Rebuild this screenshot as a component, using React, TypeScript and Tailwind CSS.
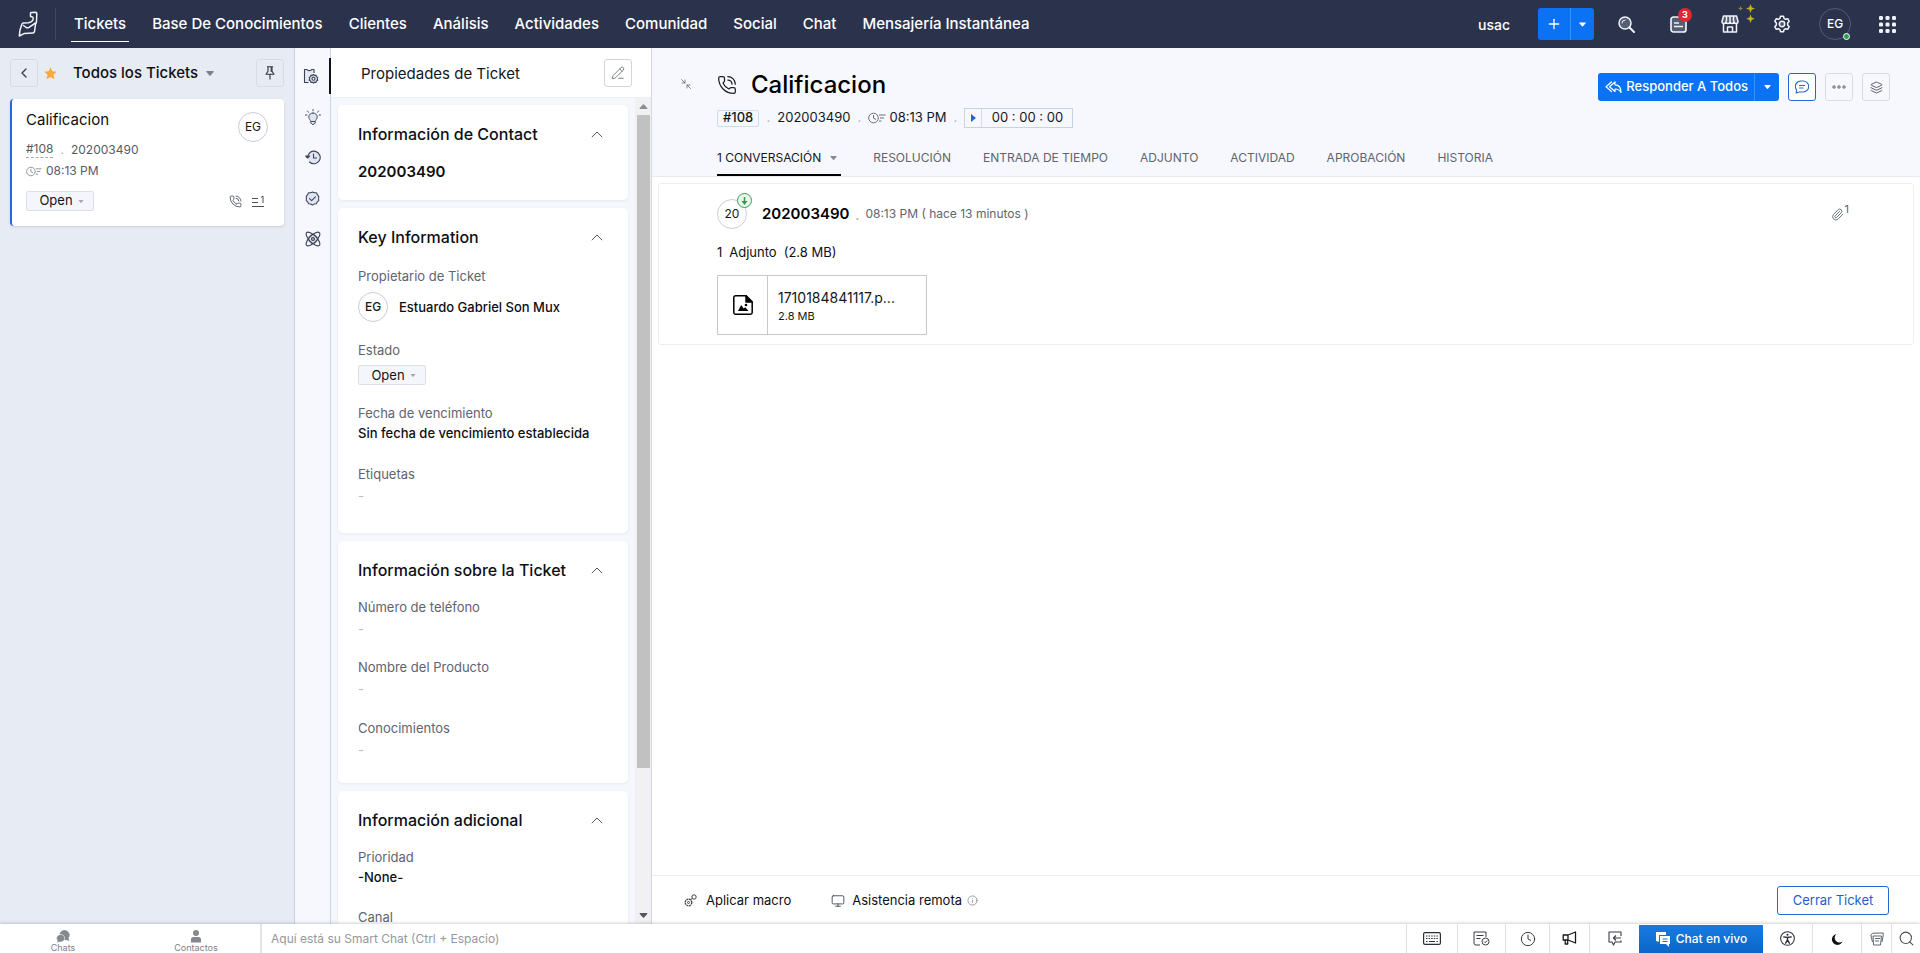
import React from 'react';
import {
  ChevronLeft, PhoneCall, Layers, Search, Plus,
  Paperclip, Monitor, Info, Clock, Minimize2, PencilLine,
} from 'lucide-react';

const navItems = ['Tickets', 'Base De Conocimientos', 'Clientes', 'Análisis', 'Actividades', 'Comunidad', 'Social', 'Chat', 'Mensajería Instantánea'];
const tabs = ['RESOLUCIÓN', 'ENTRADA DE TIEMPO', 'ADJUNTO', 'ACTIVIDAD', 'APROBACIÓN', 'HISTORIA'];

function Caret({ className }: { className: string }) {
  return (
    <svg viewBox="0 0 10 6" className={className} fill="currentColor" aria-hidden="true">
      <path d="M1 0h8c.7 0 1 .7.5 1.200L5.700 5.500a1 1 0 0 1-1.400 0L.5 1.200C0 .7.300 0 1 0z" />
    </svg>
  );
}

function Logo() {
  return (
    <svg width="22" height="30" viewBox="0 0 22 30" fill="none" stroke="#f1f3f8" strokeWidth="1.500" strokeLinejoin="round" strokeLinecap="round" aria-hidden="true">
      <path d="M13.500 4.200 Q13.500 3.700 14 3.600 L18.500 3.200 Q19.800 3.200 19.800 4.500 L19.500 12.500 Q19.300 14 18.500 15.500 L17.500 22.500 Q17.200 24 15.800 24.100 L7 24.600 L2.300 27 L3 21 L4.800 15.500 Q5.200 14.200 6.500 14.100 L11.500 13.700 Q16 12.800 16.200 9.500 Q16.200 7.800 15 7.700 L14 7.700 Q13.500 7.600 13.500 7.200 Z" />
      <path d="M6.500 16.500 L9.200 18.500 Q10.500 19.200 12 18.300 L18.500 14" />
    </svg>
  );
}

function ClockList({ className }: { className: string }) {
  return (
    <svg viewBox="0 0 18 12" className={className} fill="none" stroke="currentColor" strokeWidth="1" aria-hidden="true">
      <circle cx="5.500" cy="6" r="4.800" />
      <path d="M5.500 3v3.200l2.500 1.300M11 3h6.500M12 6h4M11 9h2.500" />
    </svg>
  );
}

function Gear({ className }: { className: string }) {
  return (
    <svg viewBox="0 0 20 20" className={className} fill="none" stroke="currentColor" strokeWidth="1.700" strokeLinejoin="round" aria-hidden="true">
      <path d="M8.300 1.500h3.400l.6 2.300 1.700 1 2.300-.7L18 7l-1.700 1.900v2.200L18 13l-1.700 2.900-2.300-.7-1.700 1-.6 2.300H8.300l-.6-2.300-1.700-1-2.300.7L2 13l1.700-1.900V8.900L2 7l1.700-2.900 2.300.7 1.700-1z" />
      <circle cx="10" cy="10" r="3" fill="#565e75" />
    </svg>
  );
}

function TicketGear() {
  return (
    <svg width="16" height="16" viewBox="0 0 16 16" fill="none" stroke="#3b4256" strokeWidth="1.100" strokeLinejoin="round" aria-hidden="true">
      <path d="M5.500 14.500H1.500V1.500h2.500c0 1.500 4.500 1.500 4.500 0h2.500V5" fill="#e4e8f3" />
      <path d="M10.500 6.500l1 .9 1.500-.2.500 1.400 1.300.8-.5 1.400.5 1.400-1.300.8-.5 1.400-1.500-.2-1 .8-1-.8-1.500.2-.5-1.400-1.300-.8.500-1.400-.5-1.400 1.300-.8.500-1.400 1.500.2z" fill="#d5d9e6" />
      <circle cx="10.500" cy="10.800" r="1.500" fill="#fff" />
    </svg>
  );
}

function HistoryClock() {
  return (
    <svg width="16" height="15" viewBox="0 0 16 15" fill="#e0e5f2" stroke="#3b4256" strokeWidth="1.100" strokeLinecap="round" strokeLinejoin="round" aria-hidden="true">
      <path d="M2.600 7.500A6.300 6.300 0 1 1 4.500 12" />
      <path d="M.7 6l1.900 2L4.500 6zM8.500 4v4h3" fill="none" />
    </svg>
  );
}

function SealCheck() {
  return (
    <svg width="15" height="15" viewBox="0 0 16 16" fill="#e0e5f2" stroke="#3b4256" strokeWidth="1.100" strokeLinejoin="round" strokeLinecap="round" aria-hidden="true">
      <path d="M8 1l2 .8 2.200.1 1 2L14.700 6l-.2 2.200.2 2-1.700 1.500-1 1.900-2.100.2L8 15l-2-1.200-2.100-.2-1-1.900-1.600-1.500L1.500 8l-.2-2 1.500-2.100 1-2L6 1.800z" />
      <path d="M4.800 8.200l2.300 2.100 4-4.100" fill="none" />
    </svg>
  );
}

function AtomIcon() {
  return (
    <svg width="16" height="16" viewBox="0 0 16 16" fill="none" stroke="#3b4256" strokeWidth="1.100" aria-hidden="true">
      <circle cx="8" cy="8" r="4.500" fill="#dfe4f1" strokeWidth=".7" />
      <ellipse cx="8" cy="8" rx="9" ry="3.600" transform="rotate(45 8 8)" />
      <ellipse cx="8" cy="8" rx="9" ry="3.600" transform="rotate(-45 8 8)" />
      <circle cx="8" cy="8" r="1.500" fill="#aeb5c8" />
    </svg>
  );
}

function ReplyAllIcon() {
  return (
    <svg width="17" height="13" viewBox="0 0 17 13" fill="none" stroke="currentColor" strokeWidth="1.200" strokeLinejoin="round" strokeLinecap="round" aria-hidden="true">
      <path d="M6.500 1L1 5.700l5.500 4.800" />
      <path d="M10 1v2.800c3.500 0 6 2.500 6 7.700-1.300-2.500-3-3.500-6-3.500v2.500L4.500 5.700z" />
    </svg>
  );
}

function PinIcon() {
  return (
    <svg width="10" height="14" viewBox="0 0 10 14" fill="none" stroke="#2e3440" strokeWidth="1.100" strokeLinejoin="round" aria-hidden="true">
      <path d="M2 .8h6M3 .8v4.400L1 8.300h8L7 5.200V.8M5 8.300v5.200" />
      <path d="M6.200 1v5" />
    </svg>
  );
}

function Avatar({ text }: { text: string }) {
  return (
    <span className="flex size-[30px] shrink-0 items-center justify-center rounded-full border border-[#c9ccd8] bg-white text-[12px] text-[#15171c]">{text}</span>
  );
}

function StatusButton() {
  return (
    <button className="flex h-5 w-[68px] items-center justify-center gap-[5px] rounded-[2px] border border-[#dcdfea] bg-[#f5f6fb] pl-[3px] text-[13px] text-[#111318]">
      Open
      <Caret className="h-[3px] w-[6px] text-[#a3a8b3]" />
    </button>
  );
}

function TicketList() {
  return (
    <aside className="flex w-[295px] shrink-0 flex-col border-r border-[#c9d2e4] bg-[#e7ebf4] px-[10px] pt-[10px]">
      <div className="flex h-[30px] items-center">
        <button aria-label="Volver" className="flex size-[28px] items-center justify-center rounded-[3px] border border-[#d6dbe7]">
          <ChevronLeft className="size-4 text-[#3a4050]" />
        </button>
        <svg viewBox="0 0 14 14" className="ml-[6px] size-[13px]" fill="#f9a93a" aria-hidden="true">
          <path d="M7 .3l2 4.400 4.700.5-3.500 3.200 1 4.800L7 10.800l-4.200 2.400 1-4.800L.3 5.200 5 4.700z" />
        </svg>
        <h2 className="ml-[16px] whitespace-nowrap text-[15px] font-medium text-[#0d0f14]">Todos los Tickets</h2>
        <Caret className="ml-2 h-[5px] w-[8px] text-[#7a808e]" />
        <button aria-label="Fijar" className="ml-auto flex size-[28px] items-center justify-center rounded-[3px] border border-[#d6dbe7]">
          <PinIcon />
        </button>
      </div>
      <article className="mt-[11px] flex h-[127px] flex-col rounded-[4px] border-l-2 border-[#2c66dd] bg-white pl-[14px] pr-4 shadow-sm">
        <div className="flex justify-between pt-[13px]">
          <div className="flex flex-col">
            <h3 className="text-[15px] leading-4 text-[#0d0f14]">Calificacion</h3>
            <div className="mt-[13px] flex items-center text-[12px] leading-4 text-[#565b66]">
              <a href="#108" className="border-b border-dashed border-[#a5a9b4]">#108</a>
              <span className="mx-[7px] text-[#a5a9b4]">.</span>
              <span>202003490</span>
            </div>
            <div className="mt-[5px] flex items-center gap-1 text-[12px] leading-4 text-[#565b66]">
              <ClockList className="h-[11px] w-[16px] text-[#858a96]" />
              08:13 PM
            </div>
          </div>
          <Avatar text="EG" />
        </div>
        <div className="mt-3 flex items-center">
          <StatusButton />
          <PhoneCall className="ml-auto size-[13px] stroke-[1.500] text-[#3c4250]" />
          <svg viewBox="0 0 14 12" className="ml-[9px] mr-[3px] h-3 w-[14px] text-[#4a4f5c]" fill="none" stroke="currentColor" aria-hidden="true">
            <path d="M1 3.500h6M1 7.500h6M1 11.500h12M10 2.500l2-1.500v7" />
          </svg>
        </div>
      </article>
    </aside>
  );
}

function Rail() {
  return (
    <nav aria-label="Paneles" className="flex w-9 shrink-0 flex-col items-center border-r border-[#cdd5e6] bg-[#f6f8fd] pt-[10px] text-[#3b4256]">
      <button aria-label="Propiedades" className="flex h-9 w-9 items-center justify-center border-r-2 border-[#10131a] pr-px"><TicketGear /></button>
      <button aria-label="Sugerencias" className="mt-[5px] flex h-9 items-center justify-center">
        <svg width="16" height="16" viewBox="0 0 16 16" fill="none" stroke="#4b5268" strokeLinejoin="round" strokeLinecap="round" aria-hidden="true">
          <path d="M8 4c2.500 0 4.200 1.700 4.200 4 0 2-1.500 2.800-2 4.500v1.500L9 15.300H7L5.800 14v-1.500C5.300 10.800 3.800 10 3.800 8 3.800 5.700 5.500 4 8 4z" fill="#dfe4f1" />
          <path d="M8 .5v1.300M2.500 2l1 1.300M13.500 2l-1 1.300M.5 6h1.500M14 6h1.500M6 12.500h4" />
        </svg>
      </button>
      <button aria-label="Historial" className="mt-[4px] flex h-9 items-center justify-center"><HistoryClock /></button>
      <button aria-label="Aprobaciones" className="mt-[5px] flex h-9 items-center justify-center"><SealCheck /></button>
      <button aria-label="Integraciones" className="mt-[5px] flex h-9 items-center justify-center"><AtomIcon /></button>
    </nav>
  );
}

function Card({ title, children, className }: { title: string; children: React.ReactNode; className: string }) {
  return (
    <section className={`shrink-0 rounded-[5px] bg-white px-5 pt-[19px] shadow-[0_1px_3px_rgba(40,50,90,0.08)] ${className}`}>
      <div className="flex h-5 items-center justify-between pr-[3px]">
        <h3 className="whitespace-nowrap text-[16px] font-medium text-[#0d0f14]">{title}</h3>
        <button aria-label={`Contraer ${title}`}>
          <svg width="12" height="7" viewBox="0 0 12 7" fill="none" stroke="#555a66" className="mr-[2px]" aria-hidden="true"><path d="M.8 6.200L6 1l5.200 5.200" /></svg>
        </button>
      </div>
      {children}
    </section>
  );
}

function Field({ label, children, className = '' }: { label: string; children?: React.ReactNode; className?: string }) {
  return (
    <div className={`flex flex-col items-start text-[13px] leading-5 ${className}`}>
      <span className="text-[#60646f]">{label}</span>
      {children}
    </div>
  );
}

const Dash = () => <span className="pt-[2px] text-[#b9bcc5]">-</span>;

function Properties() {
  return (
    <section className="flex w-[321px] shrink-0 flex-col border-r border-[#d3d6df] bg-[#f6f7fc]">
      <header className="flex h-[50px] items-center justify-between border-b border-[#eceef5] bg-white pl-[30px] pr-[19px]">
        <h2 className="pt-[3px] text-[15px] text-[#15171c]">Propiedades de Ticket</h2>
        <button aria-label="Editar" className="flex size-[28px] items-center justify-center rounded-[3px] border border-[#d3d6df] bg-white">
          <PencilLine className="size-[14px] stroke-[1.300] text-[#555a66]" />
        </button>
      </header>
      <div className="flex min-h-0 flex-1">
        <div className="flex min-w-0 flex-1 flex-col gap-2 overflow-hidden py-[7px] pl-[7px] pr-[7px]">
          <Card title="Información de Contact" className="h-[95px]">
            <p className="mt-[18px] text-[15px] font-semibold leading-5 text-[#0d0f14]">202003490</p>
          </Card>
          <Card title="Key Information" className="h-[325px]">
            <Field label="Propietario de Ticket" className="mt-[19px]">
              <span className="mt-[6px] flex items-center gap-[11px] font-medium text-[#0d0f14]"><Avatar text="EG" />Estuardo Gabriel Son Mux</span>
            </Field>
            <Field label="Estado" className="mt-[18px]">
              <span className="mt-[5px]"><StatusButton /></span>
            </Field>
            <Field label="Fecha de vencimiento" className="mt-[18px]">
              <span className="whitespace-nowrap font-medium text-[#0d0f14]">Sin fecha de vencimiento establecida</span>
            </Field>
            <Field label="Etiquetas" className="mt-[21px]"><Dash /></Field>
          </Card>
          <Card title="Información sobre la Ticket" className="h-[242px]">
            <Field label="Número de teléfono" className="mt-[17px]"><Dash /></Field>
            <Field label="Nombre del Producto" className="mt-[18px]"><Dash /></Field>
            <Field label="Conocimientos" className="mt-[19px]"><Dash /></Field>
          </Card>
          <Card title="Información adicional" className="h-[242px]">
            <Field label="Prioridad" className="mt-[17px]"><span className="font-medium text-[#0d0f14]">-None-</span></Field>
            <Field label="Canal" className="mt-[20px]" />
          </Card>
        </div>
        <div className="flex w-4 shrink-0 flex-col items-center bg-[#f1f1f3] text-[#55585f]">
          <Caret className="my-[6px] h-[5px] w-[9px] rotate-180 text-[#8b8e95]" />
          <div className="w-[13px] flex-[653] bg-[#c1c1c1]" />
          <div className="flex-[139]" />
          <Caret className="my-[6px] h-[5px] w-[9px]" />
        </div>
      </div>
    </section>
  );
}

const Dot = () => <span className="w-[18px] text-center text-[#b3b6bf]">.</span>;

function Ticket() {
  return (
    <main className="flex min-w-0 flex-1 flex-col bg-white">
      <header className="flex h-[129px] flex-col border-b border-[#e8eaf1] bg-[#f7f8fd]">
        <div className="flex items-start pr-[30px] pt-[21px]">
          <button aria-label="Contraer" className="ml-[28px] mt-[9px]"><Minimize2 className="size-3 rotate-90 stroke-[1.500] text-[#5a5f6b]" /></button>
          <PhoneCall className="ml-[25px] mt-[6px] size-5 stroke-[1.500] text-[#1b1e26]" />
          <h1 className="ml-[14px] text-[24px] font-medium leading-8 text-black">Calificacion</h1>
          <div className="ml-auto mt-[4px] flex gap-[9px]">
            <div className="flex h-7 overflow-hidden rounded-[3px] bg-[#0a72f3] text-white">
              <button className="flex items-center gap-1 pl-[7px] pr-[6px] text-[13px] font-medium">
                <ReplyAllIcon />
                Responder A Todos
              </button>
              <button aria-label="Más respuestas" className="flex w-[25px] items-center justify-center border-l border-[#3d90f7]"><Caret className="h-[4px] w-[7px]" /></button>
            </div>
            <button aria-label="Comentario" className="flex size-7 items-center justify-center rounded-[3px] border border-[#2468d6] bg-white text-[#2468d6]">
              <svg width="14" height="14" viewBox="0 0 14 14" fill="none" stroke="currentColor" strokeWidth="1.100" strokeLinejoin="round" strokeLinecap="round" aria-hidden="true">
                <path d="M1 13l.7-3A5.500 5.500 0 0 1 6.500 1h1.700a5 5 0 0 1 0 11H4.500z M4.500 5.500h5M4.500 8h3.500" />
              </svg>
            </button>
            <button aria-label="Más" className="flex size-7 items-center justify-center rounded-[3px] border border-[#d8dbe4] text-[#5a5f6b]">
              <svg width="14" height="4" viewBox="0 0 14 4" fill="none" stroke="currentColor" aria-hidden="true"><circle cx="2" cy="2" r="1.200" /><circle cx="7" cy="2" r="1.200" /><circle cx="12" cy="2" r="1.200" /></svg>
            </button>
            <button aria-label="Capas" className="flex size-7 items-center justify-center rounded-[3px] border border-[#d8dbe4] text-[#5a5f6b]">
              <Layers className="size-[13px] stroke-[1.800]" />
            </button>
          </div>
        </div>
        <div className="ml-[65px] mt-[7px] flex h-5 items-center text-[13px] text-[#15171c]">
          <span className="flex h-[17px] items-center rounded-[2px] border border-[#cfdcec] px-[5px] font-medium">#108</span>
          <Dot />
          <span>202003490</span>
          <Dot />
          <ClockList className="mr-[3px] h-3 w-[18px] text-[#6a6f7b]" />
          <span>08:13 PM</span>
          <Dot />
          <span className="flex h-5 items-stretch border border-[#c9d3de]">
            <button aria-label="Iniciar temporizador" className="flex w-[17px] items-center justify-center border-r border-[#d5dce6]">
              <svg width="5" height="8" viewBox="0 0 5 8" fill="#1668dc" aria-hidden="true"><path d="M0 0l5 4-5 4z" /></svg>
            </button>
            <span className="flex w-[90px] items-center justify-center">00 : 00 : 00</span>
          </span>
        </div>
        <nav className="ml-[65px] mt-auto flex h-9 gap-8 text-[12px] text-[#60646f]">
          <button className="flex items-center gap-[9px] border-b-2 border-black pr-1 pt-[2px] text-[#15171c]">
            <span>1 CONVERSACIÓN</span>
            <Caret className="h-[4px] w-[7px] text-[#858a96]" />
          </button>
          {tabs.map((t) => <button key={t}>{t}</button>)}
        </nav>
      </header>
      <div className="min-h-0 flex-1 px-[6px] pt-[6px]">
        <article className="h-[162px] rounded-[3px] border border-[#ecedf3] pl-[58px] pr-[64px] pt-[15px]">
          <div className="flex h-[30px] items-center">
            <div className="relative">
              <Avatar text="20" />
              <span className="absolute -top-[6px] left-5 flex size-[15px] items-center justify-center rounded-full border border-[#35a24e] bg-[#e9f7ec] text-[#2f9a48]">
                <svg width="7" height="8" viewBox="0 0 7 8" fill="currentColor" aria-hidden="true"><path d="M2.800 0h1.400v4H6.500L3.500 8 .5 4h2.300z" /></svg>
              </span>
            </div>
            <span className="ml-[15px] text-[15px] font-semibold text-black">202003490</span>
            <span className="w-4 text-center text-[#b3b6bf]">.</span>
            <span className="text-[12px] text-[#60646f]">08:13 PM ( hace 13 minutos )</span>
            <Paperclip className="ml-auto size-[13px] stroke-[1.700] text-[#60646f]" />
            <sup className="ml-px text-[11px] text-[#60646f]">1</sup>
          </div>
          <p className="mt-[15px] flex gap-[7px] text-[13px] leading-4 text-[#0d0f14]"><span>1</span><span>Adjunto</span><span>(2.8 MB)</span></p>
          <div className="mt-[15px] flex h-[60px] w-[210px] border border-[#c4c8d1]">
            <span className="flex w-[50px] items-center justify-center border-r border-[#c4c8d1]">
              <svg width="20" height="20" viewBox="0 0 20 20" fill="none" stroke="#000" strokeWidth="1.500" strokeLinejoin="round" aria-hidden="true">
                <path d="M13 .8H2.500A1.700 1.700 0 0 0 .8 2.500v15a1.700 1.700 0 0 0 1.700 1.700h15a1.700 1.700 0 0 0 1.700-1.700V7z" />
                <path d="M13 .8V7h6.200z" fill="#000" />
                <path d="M5 16l3.200-6 2.500 3.500 1.500-1.200L15.500 16z" fill="#000" stroke="none" />
                <circle cx="13" cy="10" r="1.300" fill="#000" stroke="none" />
              </svg>
            </span>
            <span className="flex flex-col justify-center pl-[10px] pt-[2px] text-[#15171c]">
              <span className="text-[14px] leading-5">1710184841117.p...</span>
              <span className="text-[11px] leading-4">2.8 MB</span>
            </span>
          </div>
        </article>
      </div>
      <footer className="flex h-[49px] shrink-0 items-center border-t border-[#ebedf2] pl-8 pr-[31px] pt-px text-[13px] text-[#0d0f14]">
        <button className="flex items-center gap-[9px]">
          <svg width="13" height="13" viewBox="0 0 13 13" fill="none" stroke="#3c4250" aria-hidden="true">
            <circle cx="4.500" cy="8.500" r="3.300" strokeWidth="1.300" strokeDasharray="2 .6" /><circle cx="4.500" cy="8.500" r="1" /><circle cx="10" cy="3" r="2.200" /><path d="M6.500 6l2-1.800" />
          </svg>
          Aplicar macro
        </button>
        <button className="ml-[40px] flex items-center">
          <Monitor className="mr-[7px] size-[14px] stroke-[1.500] text-[#3c4250]" />
          Asistencia remota
          <Info className="ml-[5px] size-[11px] stroke-[1.500] text-[#70757f]" />
        </button>
        <button className="ml-auto h-[29px] w-[112px] rounded-[3px] border border-[#2468d6] text-[13px] text-[#1d5fd0]">Cerrar Ticket</button>
      </footer>
    </main>
  );
}

function TopBar() {
  return (
    <header className="flex h-12 shrink-0 items-center bg-[#2b334c] text-white">
      <a href="#inicio" aria-label="Inicio" className="ml-[17px] flex w-[22px]"><Logo /></a>
      <span className="ml-4 h-8 w-px bg-[#3f4762]" />
      <nav className="ml-[15px] flex items-center gap-5 text-[15px] font-medium">
        {navItems.map((n, i) => (
          <a key={n} href="#nav" className={`flex h-9 items-center whitespace-nowrap border-b px-[3px] pt-[2px] ${i === 0 ? 'border-white' : 'border-transparent'}`}>{n}</a>
        ))}
      </nav>
      <div className="ml-auto flex items-center pr-6">
        <span className="text-[14px] font-medium">usac</span>
        <div className="ml-7 flex h-8 overflow-hidden rounded-[3px] bg-[#0a72f3]">
          <button aria-label="Agregar" className="flex w-8 items-center justify-center"><Plus className="size-[16px] stroke-[2]" /></button>
          <button aria-label="Más opciones" className="flex w-6 items-center justify-center border-l border-[#3d90f7]"><Caret className="h-[5px] w-[7px]" /></button>
        </div>
        <button aria-label="Buscar" className="ml-6">
          <svg width="17" height="17" viewBox="0 0 17 17" fill="none" stroke="#f1f3f8" strokeWidth="1.500" strokeLinecap="round" aria-hidden="true">
            <circle cx="7" cy="7" r="6" fill="#565e75" /><path d="M11.500 11.500l4.500 4.500" strokeWidth="2" /><path d="M4 7a3 3 0 0 1 3-3" strokeWidth="1" />
          </svg>
        </button>
        <button aria-label="Novedades" className="relative ml-[35px]">
          <svg width="17" height="17" viewBox="0 0 17 17" fill="#565e75" stroke="#f1f3f8" strokeWidth="1.700" strokeLinejoin="round" aria-hidden="true">
            <path d="M1 3.500A2.500 2.500 0 0 1 3.500 1H11l5 5v7.500a2.500 2.500 0 0 1-2.500 2.500h-10A2.500 2.500 0 0 1 1 13.500z" /><path d="M4 7h5M4 10.500h9" />
          </svg>
          <span className="absolute -top-[8px] left-2 flex size-[14px] items-center justify-center rounded-full bg-[#e5252f] text-[9px] font-bold leading-none">3</span>
        </button>
        <button aria-label="Marketplace" className="relative ml-[34px]">
          <svg width="18" height="18" viewBox="0 0 18 18" fill="none" stroke="#f1f3f8" strokeWidth="1.500" strokeLinejoin="round" aria-hidden="true">
            <path d="M2.500 1h13l1.500 5.500a2 2 0 0 1-4 0 2 2 0 0 1-4 0 2 2 0 0 1-4 0 2 2 0 0 1-4 0z" fill="#565e75" /><path d="M2.500 9v8h13V9M6.500 17v-5h5v5M5.500 1v5M9 1v5M12.500 1v5" />
          </svg>
          <svg width="20" height="22" viewBox="0 0 20 22" fill="#c4ae22" className="absolute -top-[12px] left-[16px]" aria-hidden="true">
            <path d="M13.500 1l1.200 3.300L18 5.500l-3.300 1.200L13.500 10l-1.200-3.300L9 5.500l3.300-1.200zM13.500 11.500l1.200 3 3 1.200-3 1.200-1.200 3-1.200-3-3-1.200 3-1.200z" />
            <path d="M3.500 3l.7 1.800 1.800.7-1.800.7L3.500 8l-.7-1.800L1 5.500l1.800-.7z" fill="#8d8537" />
          </svg>
        </button>
        <button aria-label="Configuración" className="ml-[34px]"><Gear className="size-[18px] text-[#f1f3f8]" /></button>
        <button className="relative ml-7 flex size-8 items-center justify-center rounded-full border border-[#535b75] text-[12px] font-medium">
          EG
          <span className="absolute -bottom-px right-0 size-[7px] rounded-full border border-white bg-[#22a34a]" />
        </button>
        <button aria-label="Aplicaciones" className="ml-7">
          <svg width="17" height="17" viewBox="0 0 17 17" fill="#f1f3f8" aria-hidden="true">
            {[2, 8.500, 15].map((y) => [2, 8.500, 15].map((x) => <rect key={`${x}-${y}`} x={x - 2} y={y - 2} width="4" height="4" rx="1.300" />))}
          </svg>
        </button>
      </div>
    </header>
  );
}

function StatusBar() {
  const cell = 'flex items-center justify-center border-l border-[#e0e1e6]';
  return (
    <footer className="z-10 flex h-[29px] shrink-0 bg-white text-[#3a3d45] shadow-[0_-1px_3px_rgba(0,0,0,0.18)]">
      <button className="flex w-[126px] flex-col items-center justify-end text-[9px] leading-[10px] text-[#7d8088]">
        <svg width="14" height="13" viewBox="0 0 14 13" fill="#85888e" aria-hidden="true"><path d="M8 0a5.500 5 0 0 1 4.500 8l.8 3-2.800-1A5.500 5 0 1 1 8 0z" /><path d="M4 4.500a4 3.800 0 1 1 0 7.500L.8 12.700l.5-2.200A4 3.800 0 0 1 4 4.500z" stroke="#fff" strokeWidth=".6" /></svg>
        Chats
      </button>
      <button className="flex w-[134px] flex-col items-center justify-end pl-[6px] text-[9px] leading-[10px] text-[#7d8088]">
        <svg width="12" height="13" viewBox="0 0 12 13" fill="#85888e" aria-hidden="true"><circle cx="6" cy="3" r="3" /><path d="M1 12.500V9.500A2.500 2.500 0 0 1 3.500 7h5A2.500 2.500 0 0 1 11 9.500v3z" /></svg>
        Contactos
      </button>
      <input aria-label="Smart Chat" placeholder="Aquí está su Smart Chat (Ctrl + Espacio)" className="min-w-0 flex-1 border-l-2 border-[#e3e4e8] pl-[9px] text-[12px] outline-none placeholder:text-[#94979e]" />
      <button aria-label="Atajos" className={`${cell} w-[51px]`}>
        <svg width="18" height="13" viewBox="0 0 18 13" fill="none" stroke="#2a2d35" aria-hidden="true"><rect x=".6" y=".6" width="16.800" height="11.800" rx="1.500" strokeWidth="1.200" /><path d="M3 4h12M3 6.500h12" strokeDasharray="1.500 1.100" /><path d="M3 9.500h1.500M6 9.500h6M13.500 9.500H15" /></svg>
      </button>
      <button aria-label="Tareas" className={`${cell} w-[48px]`}>
        <svg width="17" height="15" viewBox="0 0 17 15" fill="none" stroke="currentColor" strokeLinejoin="round" aria-hidden="true"><path d="M7 14H3a2 2 0 0 1-2-2V1h12v5M3.500 4.500h7M3.500 7.500h4" /><circle cx="12.500" cy="10.500" r="3.500" /><path d="M11 10.500l1.200 1.200 2-2.200" /></svg>
      </button>
      <button aria-label="Recientes" className={`${cell} w-[44px]`}><Clock className="size-[16px] stroke-[1.500]" /></button>
      <button aria-label="Anuncios" className={`${cell} w-[40px]`}>
        <svg width="15" height="15" viewBox="0 0 15 15" fill="none" stroke="#17191f" strokeWidth="1.300" strokeLinejoin="round" aria-hidden="true"><path d="M6 4L13.500 1v11L6 9H1.200V4zM3.200 9v4h2.500V9M6 4v5" /></svg>
      </button>
      <button aria-label="Respuesta" className={`${cell} w-[50px]`}>
        <svg width="14" height="15" viewBox="0 0 14 15" fill="none" stroke="currentColor" strokeWidth="1.100" strokeLinejoin="round" aria-hidden="true"><path d="M13 5V1H1v10h3l1.500 3 1.500-3h6V9.500M13 7H5.500M8 4.500L5.500 7 8 9.500" /></svg>
      </button>
      <button className="mt-px flex w-[124px] items-center justify-center gap-[5px] bg-gradient-to-b from-[#177be3] to-[#0b66c7] text-[12px] font-medium text-white">
        <svg width="16" height="15" viewBox="0 0 16 15" fill="#fff" aria-hidden="true"><path d="M1 0h10v3H4v6L2.500 10.500V9H1z" /><path d="M5 4h10v8h-1v3l-3-3H5z" /><path d="M7.500 7h5M7.500 9.500h5" stroke="#1473d8" /></svg>
        Chat en vivo
      </button>
      <button aria-label="Accesibilidad" className="flex w-[49px] items-center justify-center">
        <svg width="15" height="15" viewBox="0 0 16 16" fill="none" stroke="#2a2d35" strokeWidth="1.100" strokeLinecap="round" aria-hidden="true"><circle cx="8" cy="8" r="7.300" /><circle cx="8" cy="4" r="1.100" fill="#2a2d35" stroke="none" /><path d="M4 6.300l4 .7 4-.7M8 7v2.500M8 9.500L6 13M8 9.500l2 3.500" strokeWidth="1.500" /></svg>
      </button>
      <button aria-label="Modo nocturno" className={`${cell} w-[49px]`}>
        <svg width="12" height="12" viewBox="0 0 12 12" fill="#111" aria-hidden="true"><path d="M5.500 1A5.500 5.500 0 1 0 11.500 8.500 4.800 4.800 0 0 1 5.500 1z" /></svg>
      </button>
      <button aria-label="Notas" className={`${cell} w-[30px]`}>
        <svg width="14" height="14" viewBox="0 0 14 14" fill="none" stroke="#60646f" strokeLinejoin="round" aria-hidden="true"><path d="M3 4h8.500L10.500 13h-7zM2.500 10L.8 3l2-1.800L13.200 1v2.500L12 10M5 6.500h5M5 9h4" /></svg>
      </button>
      <button aria-label="Buscar en chats" className={`${cell} w-[29px]`}><Search className="size-[17px] stroke-[1.500] text-[#4a4d55]" /></button>
    </footer>
  );
}

export default function App() {
  return (
    <div className="flex h-screen flex-col overflow-hidden bg-white font-['Inter','Liberation_Sans',sans-serif]">
      <TopBar />
      <div className="flex min-h-0 flex-1">
        <TicketList />
        <Rail />
        <Properties />
        <Ticket />
      </div>
      <StatusBar />
    </div>
  );
}
